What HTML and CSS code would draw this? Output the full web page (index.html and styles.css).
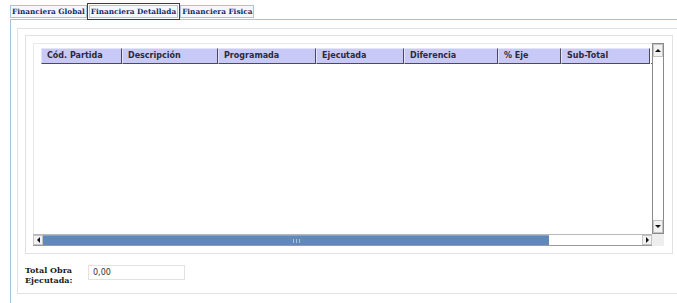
FILE: index.html
```html
<!DOCTYPE html>
<html lang="es">
<head>
    <meta charset="UTF-8">
    <title>Financiera Detallada</title>
    <link rel="stylesheet" href="styles.css">
</head>
<body>
    <div class="tabs">
        <span class="tab">Financiera Global</span>
        <span class="tab-active"><span class="tab">Financiera Detallada</span></span>
        <span class="tab">Financiera Fisica</span>
    </div>

    <div class="panel">
        <div class="box-outer">
            <div class="box-grid">
                <div class="grid">
                    <div class="grid-body">
                        <div class="grid-header">
                            <div class="col c1">Cód. Partida</div>
                            <div class="col c2">Descripción</div>
                            <div class="col c3">Programada</div>
                            <div class="col c4">Ejecutada</div>
                            <div class="col c5">Diferencia</div>
                            <div class="col c6">% Eje</div>
                            <div class="col c7">Sub-Total</div>
                            <div class="col-end"></div>
                        </div>
                    </div>

                    <!-- scroll vertical -->
                    <div class="vscroll">
                        <div class="sbtn"><span class="arr up"></span></div>
                        <div class="vtrack"></div>
                        <div class="sbtn"><span class="arr down"></span></div>
                    </div>

                    <!-- scroll horizontal -->
                    <div class="hscroll">
                        <div class="sbtn hbtn"><span class="arr left"></span></div>
                        <div class="thumb"><span class="grip"></span></div>
                        <div class="htrack"></div>
                        <div class="sbtn hbtn"><span class="arr right"></span></div>
                    </div>
                    <div class="corner"></div>
                </div>
            </div>

            <div class="total-row">
                <div class="total-label">Total Obra<br>Ejecutada:</div>
                <div class="total-input">0,00</div>
            </div>
        </div>
    </div>
</body>
</html>
```

FILE: styles.css
```css
body {
    margin: 0;
    background-color: #ffffff;
    font-family: "DejaVu Sans", sans-serif;
}

/* tabs */
.tabs {
    display: flex;
    align-items: flex-start;
    height: 14px;
    padding: 5px 0 0 10px;
}

.tab {
    display: block;
    height: 11px;
    padding: 0 1px;
    border: 1px solid #a9c4e2;
    background-color: #f4f8fc;
    font-family: "DejaVu Serif", serif;
    font-weight: bold;
    font-size: 7.3px;
    line-height: 11px;
    color: #142a66;
    white-space: nowrap;
}

.tab-active {
    display: block;
    margin: -2px 0 0 0;
    padding: 1px;
    border: 1px solid #7d1c3c;
}

/* panel */
.panel {
    margin-left: 10px;
    height: 268px;
    padding: 8px 0 8px 6px;
    border: 1px solid #a9c3dc;
    border-right: none;
}

.box-outer {
    height: 258px;
    padding: 6px 0 0 7px;
    border: 1px solid #e2e2e2;
    border-right: none;
}

.box-grid {
    width: 631px;
    height: 203px;
    padding: 7px 8px 7px 7px;
    border: 1px solid #e2e2e2;
}

/* grid */
.grid {
    display: grid;
    grid-template-columns: 1fr 12px;
    grid-template-rows: 1fr 12px;
    height: 203px;
}

.grid-body {
    padding: 4px 0 0 7px;
    border-top: 1px solid #e8e8e8;
    border-left: 1px solid #e8e8e8;
}

.grid-header {
    display: flex;
    align-items: flex-end;
}

.col {
    box-sizing: border-box;
    height: 16px;
    padding-left: 5px;
    background-color: #c9c9f7;
    border-top: 1px solid #e4e4fc;
    border-left: 1px solid #e4e4fc;
    border-right: 1px solid #4a4a5a;
    border-bottom: 1px solid #4a4a5a;
    font-weight: bold;
    font-size: 8px;
    line-height: 14px;
    color: #2a2a3a;
    white-space: nowrap;
}

.c1 { width: 81px; }
.c2 { width: 96px; }
.c3 { width: 98px; }
.c4 { width: 88px; }
.c5 { width: 94px; }
.c6 { width: 63px; }
.c7 { width: 89px; }

.col-end {
    width: 1px;
    height: 1px;
    margin-left: 1px;
    background-color: #555;
}

/* scrollbars */
.vscroll {
    display: flex;
    flex-direction: column;
    border: 1px solid #8a8a8a;
    background-color: #ffffff;
}

.vtrack {
    flex: 1;
}

.sbtn {
    display: flex;
    align-items: center;
    justify-content: center;
    height: 11px;
    background-color: #f2f2f2;
    border: 1px solid #c4c4c4;
}

.hscroll {
    display: flex;
    border-top: 1px solid #b8b8b8;
    border-bottom: 1px solid #9a9a9a;
}

.hbtn {
    width: 8px;
    height: auto;
}

.thumb {
    display: flex;
    align-items: center;
    justify-content: center;
    width: 506px;
    background-color: #6089b7;
    border-top: 1px solid #7fa3cc;
}

.grip {
    width: 9px;
    height: 4px;
    background-image: radial-gradient(circle, #a9c2de 40%, transparent 45%);
    background-size: 3px 2px;
}

.htrack {
    flex: 1;
    background-color: #ffffff;
}

.corner {
    background-color: #eeeeee;
}

.arr {
    width: 0;
    height: 0;
}

.arr.up {
    border-left: 3px solid transparent;
    border-right: 3px solid transparent;
    border-bottom: 3px solid #111;
}

.arr.down {
    border-left: 3px solid transparent;
    border-right: 3px solid transparent;
    border-top: 3px solid #111;
}

.arr.left {
    border-top: 3px solid transparent;
    border-bottom: 3px solid transparent;
    border-right: 3px solid #111;
}

.arr.right {
    border-top: 3px solid transparent;
    border-bottom: 3px solid transparent;
    border-left: 3px solid #111;
}

/* total */
.total-row {
    display: flex;
    align-items: flex-start;
    margin-top: 11px;
}

.total-label {
    width: 63px;
    font-family: "DejaVu Serif", serif;
    font-weight: bold;
    font-size: 8px;
    line-height: 10px;
    color: #1a1a1a;
}

.total-input {
    box-sizing: border-box;
    width: 97px;
    height: 15px;
    padding-left: 4px;
    border: 1px solid #e2e2e2;
    font-size: 8px;
    line-height: 13px;
    color: #333;
}
```
